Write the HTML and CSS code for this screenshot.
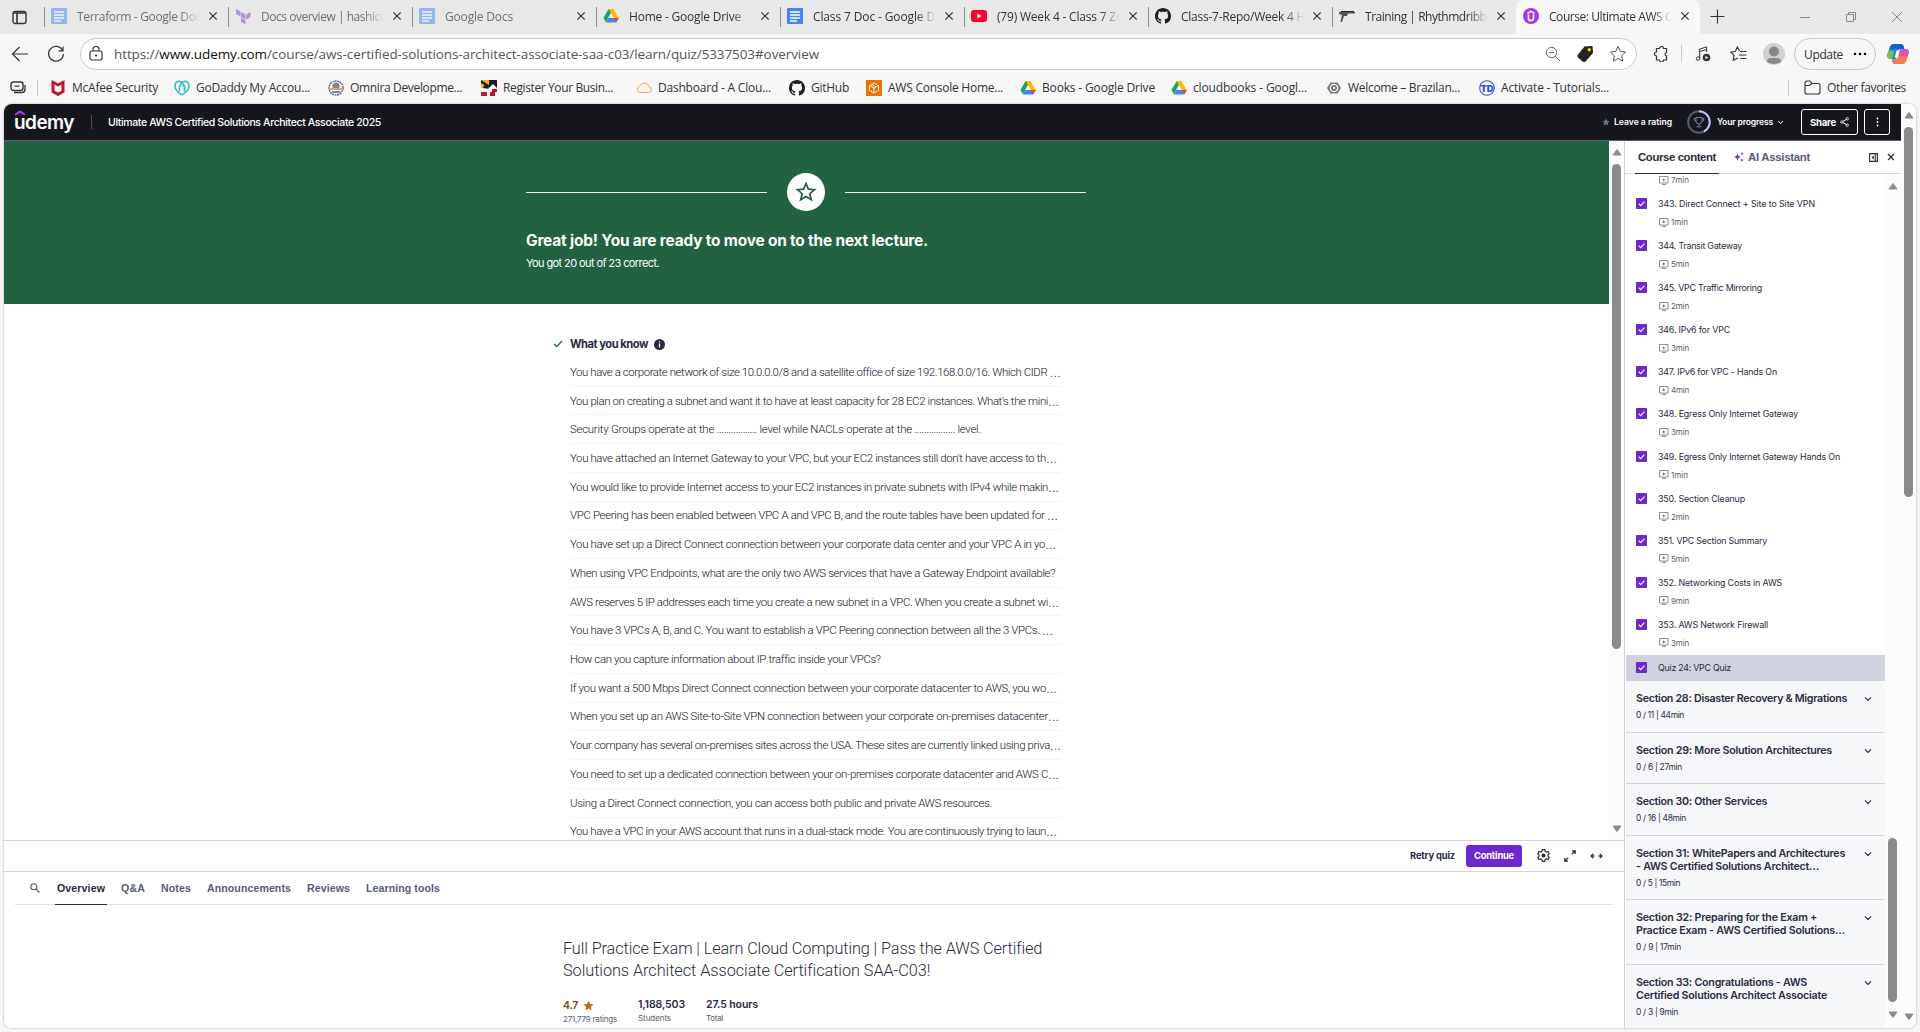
FILE: index.html
```html
<!DOCTYPE html>
<html lang="en">
<head>
<meta charset="utf-8">
<title>Course: Ultimate AWS Certified Solutions Architect Associate 2025 | Udemy</title>
<link rel="stylesheet" href="styles.css">
</head>
<body>
<svg width="0" height="0" class="defs">
  <symbol id="doc" viewBox="0 0 16 16"><rect width="16" height="16" rx="1" fill="#4285f4"/><path d="M3 4h10M3 7h10M3 10h10M3 13h7" stroke="#fff" stroke-width="1.5"/></symbol>
  <symbol id="drive" viewBox="0 0 16 16"><path d="M5.6 1h4.8L5.3 9.900 2.800 14 .4 10z" fill="#1ea362"/><path d="M5.600 1h4.800l5.300 9h-4.900z" fill="#ffba00"/><path d="M5.300 10h10.400l-2.500 4.500H2.800z" fill="#4285f4"/><path d="M10.800 10h4.900l-2.500 4.500z" fill="#ea4335"/><path d="M8 5.300l2.700 4.700H5.300z" fill="#f7f7f7"/></symbol>
  <symbol id="github" viewBox="0 0 16 16"><path fill="#1b1f23" d="M8 0C3.580 0 0 3.580 0 8c0 3.540 2.290 6.530 5.470 7.590.4.070.55-.17.55-.38 0-.19-.01-.82-.01-1.490-2.010.37-2.530-.49-2.690-.94-.09-.23-.48-.94-.82-1.130-.28-.15-.68-.52-.01-.53.63-.01 1.080.58 1.230.82.72 1.210 1.870.87 2.330.66.07-.52.28-.87.51-1.070-1.780-.2-3.640-.89-3.640-3.950 0-.87.31-1.590.82-2.150-.08-.2-.36-1.020.08-2.120 0 0 .67-.21 2.200.82.64-.18 1.320-.27 2-.27s1.360.09 2 .27c1.530-1.040 2.200-.82 2.200-.82.44 1.100.16 1.920.08 2.120.51.56.82 1.270.82 2.150 0 3.070-1.870 3.750-3.650 3.950.29.25.54.73.54 1.480 0 1.070-.01 1.930-.01 2.200 0 .21.15.46.55.38A8 8 0 0 0 16 8c0-4.420-3.580-8-8-8z"/></symbol>
  <symbol id="close" viewBox="0 0 10 10"><path d="M1.300 1.300l7.400 7.400M8.700 1.300L1.300 8.700" stroke="#333" stroke-width="1.200"/></symbol>
  <symbol id="check" viewBox="0 0 11 11"><rect width="11" height="11" rx=".8" fill="#6d28d2"/><path d="M2.700 5.700l2 2 3.700-4" stroke="#fff" stroke-width="1.100" fill="none"/></symbol>
  <symbol id="video" viewBox="0 0 10 9"><path d="M.5.500h8.500v6.500H.5zM3 8.500h4" stroke="#8a8aa0" fill="none"/><path d="M3.800 2.200v3.300l2.700-1.600z" fill="#6a6a85"/></symbol>
  <symbol id="chev" viewBox="0 0 8 6"><path d="M1 1.300l3 3 3-3" fill="none" stroke="currentColor" stroke-width="1.200"/></symbol>
  <symbol id="up" viewBox="0 0 10 7"><path d="M5 .5L9 6H1z" fill="#8b8b8b" stroke="#8b8b8b" stroke-linejoin="round"/></symbol>
  <symbol id="down" viewBox="0 0 10 7"><path d="M5 6.500L1 1h8z" fill="#8b8b8b" stroke="#8b8b8b" stroke-linejoin="round"/></symbol>
</svg>

<div class="tabstrip">
  <svg class="workspaces" width="15" height="15" viewBox="0 0 15 15"><rect x="1" y="1.500" width="13" height="12" rx="2.200" fill="none" stroke="#333" stroke-width="1.400"/><path d="M1.500 3h12M5 3v10" stroke="#333" stroke-width="1.600"/></svg>
  <div class="tab asleep"><svg class="fav"><use href="#doc"/></svg><div class="label"><span data-w="124">Terraform - Google Doc</span></div><svg class="x"><use href="#close"/></svg></div>
  <div class="tab asleep"><svg class="fav" viewBox="0 0 16 16"><path d="M1 1l4.500 2.500v5L1 6zM6 4l4.500 2.500v5L6 9zM6 9.800l4.500 2.500V16L6 14zM11.200 6.500L15.500 4v5l-4.300 2.500z" fill="#7b42bc"/></svg><div class="label"><span data-w="124">Docs overview | hashicc</span></div><svg class="x"><use href="#close"/></svg></div>
  <div class="tab asleep"><svg class="fav"><use href="#doc"/></svg><div class="label"><span data-w="68">Google Docs</span></div><svg class="x"><use href="#close"/></svg></div>
  <div class="tab"><svg class="fav"><use href="#drive"/></svg><div class="label"><span data-w="112">Home - Google Drive</span></div><svg class="x"><use href="#close"/></svg></div>
  <div class="tab"><svg class="fav"><use href="#doc"/></svg><div class="label"><span data-w="122">Class 7 Doc - Google D</span></div><svg class="x"><use href="#close"/></svg></div>
  <div class="tab"><svg class="fav" viewBox="0 0 16 16"><rect y="2" width="16" height="12" rx="3" fill="#ff0033"/><path d="M6.300 5.500v5L10.700 8z" fill="#fff"/></svg><div class="label"><span data-w="126">(79) Week 4 - Class 7 Zo</span></div><svg class="x"><use href="#close"/></svg></div>
  <div class="tab"><svg class="fav"><use href="#github"/></svg><div class="label"><span data-w="124">Class-7-Repo/Week 4 H</span></div><svg class="x"><use href="#close"/></svg></div>
  <div class="tab"><svg class="fav" viewBox="0 0 16 16"><path d="M0 4h16v1.500H9l-1 2.500H5L3 14H1.500L3 7 0 6z" fill="#55524a"/><path d="M2 3h13v1H2z" fill="#222"/></svg><div class="label"><span data-w="124">Training | Rhythmdribbl</span></div><svg class="x"><use href="#close"/></svg></div>
  <div class="tab active"><svg class="fav" viewBox="0 0 16 16"><circle cx="8" cy="8" r="8" fill="#a435f0"/><path d="M4.500 5.500L8 3.200l3.500 2.300" fill="none" stroke="#fff" stroke-width="1.500"/><path d="M5.500 6.500v3.700a2.500 2.500 0 0 0 5 0V6.500" fill="none" stroke="#fff" stroke-width="1.700"/></svg><div class="label"><span data-w="123">Course: Ultimate AWS C</span></div><svg class="x"><use href="#close"/></svg></div>
  <svg class="newtab" width="15" height="15" viewBox="0 0 15 15"><path d="M7.500.5v14M.5 7.500h14" stroke="#333" stroke-width="1.100"/></svg>
  <div class="winctl">
    <svg width="12" height="12" viewBox="0 0 12 12"><path d="M1 6.500h10" stroke="#888"/></svg>
    <svg width="12" height="12" viewBox="0 0 12 12"><path d="M1.500 3.500h7v7h-7zM3.500 3V1.500h7v7H9" fill="none" stroke="#888"/></svg>
    <svg width="12" height="12" viewBox="0 0 12 12"><path d="M1 1l10 10M11 1L1 11" stroke="#888"/></svg>
  </div>
</div>

<div class="toolbar">
  <svg class="back" width="18" height="16" viewBox="0 0 18 16"><path d="M17 8H1.500M8.500 1L1.500 8l7 7" fill="none" stroke="#333" stroke-width="1.200"/></svg>
  <svg class="reload" width="18" height="18" viewBox="0 0 18 18"><path d="M15.500 5.200A7.400 7.400 0 1 0 16.400 9M16 1.500v4.300h-4.300" fill="none" stroke="#333" stroke-width="1.200"/></svg>
  <div class="address">
    <svg width="14" height="16" viewBox="0 0 14 16"><rect x="1" y="5" width="12" height="9" rx="2" fill="none" stroke="#333" stroke-width="1.200"/><path d="M4 5V3.500a3 3 0 0 1 6 0V5" fill="none" stroke="#333" stroke-width="1.200"/><circle cx="7" cy="9.500" r="1.100" fill="#333"/></svg>
    <span class="url" data-w="705">https://<b>www.udemy.com</b>/course/aws-certified-solutions-architect-associate-saa-c03/learn/quiz/5337503#overview</span>
    <div class="address-actions">
      <svg width="16" height="16" viewBox="0 0 16 16"><circle cx="6.500" cy="6.500" r="5.200" fill="none" stroke="#666"/><path d="M4 6.500h5M10.300 10.300L15 15" stroke="#666"/></svg>
      <svg width="18" height="18" viewBox="0 0 18 18"><path d="M8.500 1.500L16.500 1l.5 7-7.500 8.500q-1.500 1.200-3 0L2 12.500q-1.200-1.500 0-3z" fill="#222"/><circle cx="13.300" cy="4.800" r="1.800" fill="#ffc400"/></svg>
      <svg width="18" height="18" viewBox="0 0 18 18"><path d="M9 1.500l2.300 4.900 5.200.7-3.800 3.700.9 5.300L9 13.500l-4.600 2.600.9-5.300L1.500 7.100l5.200-.7z" fill="none" stroke="#555"/></svg>
    </div>
  </div>
  <div class="tools">
    <svg width="16" height="16" viewBox="0 0 16 16"><path d="M3.500 2.500h3a2 2 0 0 1 4 0h3v4a1.800 1.800 0 0 0 0 3.500v4h-3a2 2 0 0 1-4 0h-3v-4a2 2 0 1 1 0-4z" fill="none" stroke="#333" stroke-width="1.200"/></svg>
    <i class="vr"></i>
    <svg width="16" height="16" viewBox="0 0 16 16"><circle cx="3" cy="12.500" r="1.700" fill="none" stroke="#333"/><path d="M4.700 12.500V3l7-2v5M4.700 5.500l7-2" fill="none" stroke="#333"/><circle cx="11.500" cy="11.500" r="3.800" fill="#333"/><path d="M10.500 9.700v3.600l2.700-1.800z" fill="#fff"/></svg>
    <svg width="17" height="16" viewBox="0 0 17 16"><path d="M9.500 5L7.400 1 5.200 5.500l-4.400.7 3.300 3.200-.8 4.800L8 12M10 5.500h6.500M9 9h7.500M10.500 12.500h6" fill="none" stroke="#333" stroke-width="1.200"/></svg>
    <svg width="22" height="22" viewBox="0 0 22 22"><circle cx="11" cy="11" r="11" fill="#d2d0ce"/><circle cx="11" cy="8.500" r="5" fill="#8a8886"/><path d="M4 19q0-4 4-4h6q4 0 4 4-7 4-14 0z" fill="#8a8886"/></svg>
    <div class="update"><span data-w="39">Update</span><svg width="14" height="4" viewBox="0 0 14 4"><circle cx="2" cy="2" r="1.300"/><circle cx="7" cy="2" r="1.300"/><circle cx="12" cy="2" r="1.300"/></svg></div>
    <svg width="22" height="20" viewBox="0 0 22 20"><path d="M7 0h7q2 0 2.500 2l.8 3H12L9 15H4q-5 0-3.500-5L3 3Q4 0 7 0z" fill="#168bdc"/><path d="M3 3q1-3 4-3h7q2 0 2.500 2l.8 3H2.300z" fill="#1266c9"/><path d="M.5 10L1.500 7H7l-2 8H4q-4 0-3.500-5z" fill="#7cc243"/><path d="M15 20H8q-2 0-2.500-2L4.700 15H10l3-10h5q5 0 3.500 5L19 17q-1 3-4 3z" fill="#e8539b"/><path d="M4.700 15H10l1-3h9.800L19 17q-1 3-4 3H8q-2 0-2.500-2z" fill="#fa7a50"/><path d="M13 5h5q4.500 0 3.800 4H12z" fill="#b65bdc"/><path d="M9.500 6.500h3.300l-2 7H7.600z" fill="#f7f7f7"/></svg>
  </div>
</div>

<div class="bookmarks">
  <svg class="groups" width="16" height="13" viewBox="0 0 16 13"><rect x="1" y="1" width="12" height="8.500" rx="2.500" fill="none" stroke="#333" stroke-width="1.400"/><path d="M4.500 5.200h5M15 4v4.500q0 3-3 3H4" fill="none" stroke="#333" stroke-width="1.300"/></svg>
  <i class="vr"></i>
  <div class="marks">
    <div class="mark"><svg class="fav" viewBox="0 0 16 16"><path d="M1.500 0L8 3.500 14.500 0v12.500L8 16l-6.500-3.500z" fill="#c8102e"/><path d="M4.500 4.500v6.200L8 12.500l3.500-1.800V4.500L8 6.500z" fill="#f7f7f7"/></svg><span data-w="86">McAfee Security</span></div>
    <div class="mark"><svg class="fav" viewBox="0 0 16 16"><path d="M8 14.800C2 12 0 7 1.500 3.500 3 .3 7 .8 9.500 4.500c1.500 2.300 1.700 4.500.8 7M8 14.800c6-2.800 8-7.800 6.500-11.300C13 .3 9 .8 6.500 4.500 5 6.800 4.800 9 5.700 11.500" fill="none" stroke="#35bfc4" stroke-width="1.600"/><path d="M8 6h3v3H9" fill="none" stroke="#35bfc4"/></svg><span data-w="114">GoDaddy My Accou...</span></div>
    <div class="mark"><svg class="fav" viewBox="0 0 16 16"><circle cx="8" cy="8" r="7" fill="#fff" stroke="#566083" stroke-width="1.400" stroke-dasharray="2 .6"/><circle cx="8" cy="6" r="3.600" fill="#7d83a5"/><path d="M1 9h14" stroke="#dca958" stroke-width="2"/><path d="M4 12h8" stroke="#566083" stroke-width="1.500"/></svg><span data-w="112">Omnira Developme...</span></div>
    <div class="mark"><svg class="fav" viewBox="0 0 16 16"><rect width="16" height="16" fill="#fff"/><path d="M0 0h8v8H0z" fill="#fdb913"/><path d="M0 0l8 5v3L0 3zM8 0h8v8l-4-4-4 4zM2 8l2-4 4 5z" fill="#1a1a1a"/><path d="M0 12h6v4H0zM9 12h5v4H9zM11 9h5v3h-5z" fill="#c8102e"/></svg><span data-w="110">Register Your Busin...</span></div>
    <div class="mark"><svg class="fav" viewBox="0 0 16 16"><path d="M4 12.500h8.500a3 3 0 0 0 .6-5.900 5 5 0 0 0-9.500-.3 3.200 3.200 0 0 0 .4 6.200z" fill="#fff4ea" stroke="#f5a15c"/></svg><span data-w="113">Dashboard - A Clou...</span></div>
    <div class="mark"><svg class="fav"><use href="#github"/></svg><span data-w="38">GitHub</span></div>
    <div class="mark"><svg class="fav" viewBox="0 0 16 16"><rect width="16" height="16" fill="#ed7100"/><path d="M8 3l4.500 2.500v5L8 13l-4.500-2.500v-5zM3.500 5.500L8 8l4.500-2.500M8 8v5M5.500 4.300L10 7" fill="none" stroke="#fff" stroke-width=".9"/></svg><span data-w="115">AWS Console Home...</span></div>
    <div class="mark"><svg class="fav"><use href="#drive"/></svg><span data-w="113">Books - Google Drive</span></div>
    <div class="mark"><svg class="fav"><use href="#drive"/></svg><span data-w="114">cloudbooks - Googl...</span></div>
    <div class="mark"><svg class="fav" viewBox="0 0 16 16"><path d="M4.500 2.500h7L15 8l-3.500 5.500h-7L1 8z" fill="#757575"/><circle cx="8" cy="8" r="3.700" fill="none" stroke="#fff" stroke-width="1.300"/><circle cx="8" cy="8" r="1.200" fill="#fff"/></svg><span data-w="112">Welcome – Brazilan...</span></div>
    <div class="mark"><svg class="fav" viewBox="0 0 16 16"><circle cx="8" cy="8" r="7.300" fill="#fff" stroke="#2b50f0" stroke-width="1.100"/><text x="8" y="11.500" text-anchor="middle" font-family="Inter, sans-serif" font-size="9.500" font-weight="900" fill="#2b50f0" textLength="13">TD</text></svg><span data-w="108">Activate - Tutorials...</span></div>
  </div>
  <div class="other"><i class="vr"></i><svg width="17" height="15" viewBox="0 0 17 15"><path d="M1 3.500Q1 1 3 1h3l2 2.500h6q2 0 2 2V12q0 2-2 2H3q-2 0-2-2zM1 5.500h4.500L8 3.500" fill="none" stroke="#333" stroke-width="1.100"/></svg><span data-w="79">Other favorites</span></div>
</div>

<div class="page">
  <div class="app">
    <header class="header">
      <div class="logo"><svg width="10" height="6" viewBox="0 0 10 6"><path d="M0 3.500L5 .3l5 3.200v2.300L5 3 0 5.800z" fill="#a435f0"/></svg><span data-w="60">udemy</span></div>
      <i class="vr"></i>
      <span class="course" data-w="273">Ultimate AWS Certified Solutions Architect Associate 2025</span>
      <div class="header-right">
        <svg width="8" height="8" viewBox="0 0 18 18"><path d="M9 1l2.500 5.400 5.700.7-4.200 4 1 5.900L9 14l-5 3 1-5.900-4.200-4 5.700-.7z" fill="#6c6f8c"/></svg>
        <span class="rate" data-w="58">Leave a rating</span>
        <svg class="ring" width="24" height="24" viewBox="0 0 24 24"><circle cx="12" cy="12" r="10.800" fill="none" stroke="#595c73" stroke-width="2"/><path d="M12 1.200a10.800 10.800 0 0 1 5 20.300" fill="none" stroke="#c0c4fc" stroke-width="2"/><path d="M9 7.500h6v4q-.5 2.500-3 2.500t-3-2.500zM9 8.500H7q0 3 2.200 3M15 8.500h2q0 3-2.200 3M12 14v2.500M9.500 16.800h5" fill="none" stroke="#7a7d97"/></svg>
        <span class="prog" data-w="56">Your progress</span>
        <svg class="pchev" width="7" height="5"><use href="#chev"/></svg>
        <div class="btn share"><span data-w="26">Share</span><svg width="9" height="10" viewBox="0 0 9 10"><path d="M7 2L2 5l5 3" fill="none" stroke="#fff"/><g fill="#16171d" stroke="#fff" stroke-width=".8"><circle cx="7.200" cy="1.800" r="1.200"/><circle cx="1.800" cy="5" r="1.200"/><circle cx="7.200" cy="8.200" r="1.200"/></g></svg></div>
        <div class="btn more"><svg width="3" height="10" viewBox="0 0 3 10" fill="#fff"><circle cx="1.500" cy="1.500" r=".9"/><circle cx="1.500" cy="5" r=".9"/><circle cx="1.500" cy="8.500" r=".9"/></svg></div>
      </div>
    </header>

    <div class="columns">
      <main class="main">
        <div class="quiz">
          <div class="quiz-body">
            <section class="result">
              <div class="divider"><i></i><span class="medal"><svg width="22" height="22" viewBox="0 0 22 22"><path d="M11 2.500l2.400 5.700 6.100.5-4.700 4 1.500 6L11 15.500l-5.300 3.200 1.500-6-4.700-4 6.100-.5z" fill="none" stroke="#206241" stroke-width="1.700"/></svg></span><i></i></div>
              <h1><span data-w="402">Great job! You are ready to move on to the next lecture.</span></h1>
              <p><span data-w="133">You got 20 out of 23 correct.</span></p>
            </section>
            <section class="know">
              <h2><svg class="tick" width="10" height="8" viewBox="0 0 10 8"><path d="M1 4l2.700 2.700L9 1" fill="none" stroke="#206241" stroke-width="1.200"/></svg><span data-w="78">What you know</span><svg class="info" width="11" height="11" viewBox="0 0 11 11"><circle cx="5.500" cy="5.500" r="5.500" fill="#2a2b3f"/><path d="M5.500 2.300v1.300M5.500 4.600v4" stroke="#fff" stroke-width="1.200"/></svg></h2>
              <ul>
                <li><span data-w="479">You have a corporate network of size 10.0.0.0/8 and a satellite office of size 192.168.0.0/16. Which CIDR </span><b>…</b></li>
                <li><span data-w="478">You plan on creating a subnet and want it to have at least capacity for 28 EC2 instances. What's the mini</span><b>…</b></li>
                <li><span data-w="403">Security Groups operate at the <em>.................</em> level while NACLs operate at the <em>.................</em> level.</span></li>
                <li><span data-w="476">You have attached an Internet Gateway to your VPC, but your EC2 instances still don't have access to th</span><b>…</b></li>
                <li><span data-w="478">You would like to provide Internet access to your EC2 instances in private subnets with IPv4 while makin</span><b>…</b></li>
                <li><span data-w="477">VPC Peering has been enabled between VPC A and VPC B, and the route tables have been updated for </span><b>…</b></li>
                <li><span data-w="475">You have set up a Direct Connect connection between your corporate data center and your VPC A in yo</span><b>…</b></li>
                <li><span data-w="485">When using VPC Endpoints, what are the only two AWS services that have a Gateway Endpoint available?</span></li>
                <li><span data-w="478">AWS reserves 5 IP addresses each time you create a new subnet in a VPC. When you create a subnet wi</span><b>…</b></li>
                <li><span data-w="472">You have 3 VPCs A, B, and C. You want to establish a VPC Peering connection between all the 3 VPCs. </span><b>…</b></li>
                <li><span data-w="310">How can you capture information about IP traffic inside your VPCs?</span></li>
                <li><span data-w="476">If you want a 500 Mbps Direct Connect connection between your corporate datacenter to AWS, you wo</span><b>…</b></li>
                <li><span data-w="478">When you set up an AWS Site-to-Site VPN connection between your corporate on-premises datacenter</span><b>…</b></li>
                <li><span data-w="480">Your company has several on-premises sites across the USA. These sites are currently linked using priva</span><b>…</b></li>
                <li><span data-w="478">You need to set up a dedicated connection between your on-premises corporate datacenter and AWS C</span><b>…</b></li>
                <li><span data-w="422">Using a Direct Connect connection, you can access both public and private AWS resources.</span></li>
                <li><span data-w="476">You have a VPC in your AWS account that runs in a dual-stack mode. You are continuously trying to laun</span><b>…</b></li>
              </ul>
            </section>
          </div>
          <div class="scroll scroll-quiz"><svg><use href="#up"/></svg><i></i><svg><use href="#down"/></svg></div>
        </div>

        <div class="controls">
          <span class="retry" data-w="45">Retry quiz</span>
          <div class="continue"><span data-w="40">Continue</span></div>
          <svg class="gear" width="13" height="13" viewBox="0 0 13 13"><path d="M5.300.7h2.400l.4 1.600 1.300.7 1.600-.5 1.200 2.100-1.200 1.100v1.600l1.200 1.100-1.200 2.100-1.600-.5-1.300.7-.4 1.600H5.300l-.4-1.600-1.300-.7-1.600.5L.8 8.400 2 7.300V5.700L.8 4.600 2 2.500l1.600.5 1.300-.7z" fill="none" stroke="#2a2b3f" stroke-width="1.200"/><circle cx="6.500" cy="6.500" r="2" fill="#2a2b3f"/></svg>
          <svg class="expand" width="12" height="12" viewBox="0 0 12 12"><path d="M8 .8h3.200V4M11 1L7.700 4.300M4 11.200H.8V8M1 11l3.300-3.300" fill="none" stroke="#2a2b3f" stroke-width="1.200"/></svg>
          <svg class="wide" width="13" height="6" viewBox="0 0 13 6"><path d="M5 3H1M3.300.8L1 3l2.300 2.200M8 3H12M9.700.8L12 3 9.700 5.200" fill="none" stroke="#2a2b3f" stroke-width="1.200"/></svg>
        </div>

        <div class="dashboard">
          <nav class="subnav">
            <svg width="10" height="10" viewBox="0 0 10 10"><circle cx="3.800" cy="3.800" r="3" fill="none" stroke="#595c73" stroke-width="1.100"/><path d="M6 6l3.500 3.500" stroke="#595c73" stroke-width="1.300"/></svg>
            <div class="on"><span data-w="48">Overview</span></div>
            <div><span data-w="24">Q&amp;A</span></div>
            <div><span data-w="30">Notes</span></div>
            <div><span data-w="84">Announcements</span></div>
            <div><span data-w="43">Reviews</span></div>
            <div><span data-w="74">Learning tools</span></div>
          </nav>
          <div class="about">
            <p><span data-w="479">Full Practice Exam | Learn Cloud Computing | Pass the AWS Certified</span></p>
            <p><span data-w="367">Solutions Architect Associate Certification SAA-C03!</span></p>
            <div class="stats">
              <div class="stat rating"><strong><span data-w="15">4.7</span><svg width="11" height="11" viewBox="0 0 18 18"><path d="M9 1l2.500 5.400 5.700.7-4.200 4 1 5.900L9 14l-5 3 1-5.900-4.200-4 5.700-.7z" fill="#c4710d"/></svg></strong><small><span data-w="54">271,779 ratings</span></small></div>
              <div class="stat"><strong><span data-w="47">1,188,503</span></strong><small><span data-w="33">Students</span></small></div>
              <div class="stat"><strong><span data-w="52">27.5 hours</span></strong><small><span data-w="17">Total</span></small></div>
            </div>
          </div>
        </div>
      </main>

      <aside class="side">
        <div class="side-head">
          <div class="side-tab on"><span data-w="78">Course content</span></div>
          <div class="side-tab ai"><svg width="10" height="10" viewBox="0 0 10 10"><path d="M3.500 1.500l1 2.500 2.500 1-2.500 1-1 2.500-1-2.500L0 5l2.500-1zM8 0l.5 1.300L9.800 1.800l-1.300.5L8 3.600l-.5-1.300-1.300-.5 1.300-.5zM8 6.300l.5 1.300 1.300.5-1.300.5L8 9.900l-.5-1.300-1.300-.5 1.300-.5z" fill="#6d28d2"/></svg><span data-w="62">AI Assistant</span></div>
          <div class="side-actions"><svg width="9" height="9" viewBox="0 0 9 9"><path d="M.6.600h7.800v7.800H.6zM6.300.500v8" fill="none" stroke="#2a2b3f" stroke-width="1.100"/><path d="M4.800 2.500v4L2.500 4.500z" fill="#2a2b3f"/></svg><svg width="8" height="8" viewBox="0 0 10 10"><path d="M1.300 1.300l7.400 7.400M8.700 1.300L1.300 8.700" stroke="#2a2b3f" stroke-width="1.600"/></svg></div>
        </div>
        <div class="side-body">
          <div class="lectures">
            <div class="time first"><svg><use href="#video"/></svg><span data-w="18">7min</span></div>
            <div class="lec"><div class="name"><svg><use href="#check"/></svg><span data-w="157">343. Direct Connect + Site to Site VPN</span></div><div class="time"><svg><use href="#video"/></svg><span data-w="17">1min</span></div></div>
            <div class="lec"><div class="name"><svg><use href="#check"/></svg><span data-w="84">344. Transit Gateway</span></div><div class="time"><svg><use href="#video"/></svg><span data-w="18">5min</span></div></div>
            <div class="lec"><div class="name"><svg><use href="#check"/></svg><span data-w="104">345. VPC Traffic Mirroring</span></div><div class="time"><svg><use href="#video"/></svg><span data-w="18">2min</span></div></div>
            <div class="lec"><div class="name"><svg><use href="#check"/></svg><span data-w="72">346. IPv6 for VPC</span></div><div class="time"><svg><use href="#video"/></svg><span data-w="18">3min</span></div></div>
            <div class="lec"><div class="name"><svg><use href="#check"/></svg><span data-w="119">347. IPv6 for VPC - Hands On</span></div><div class="time"><svg><use href="#video"/></svg><span data-w="18">4min</span></div></div>
            <div class="lec"><div class="name"><svg><use href="#check"/></svg><span data-w="140">348. Egress Only Internet Gateway</span></div><div class="time"><svg><use href="#video"/></svg><span data-w="18">3min</span></div></div>
            <div class="lec"><div class="name"><svg><use href="#check"/></svg><span data-w="182">349. Egress Only Internet Gateway Hands On</span></div><div class="time"><svg><use href="#video"/></svg><span data-w="17">1min</span></div></div>
            <div class="lec"><div class="name"><svg><use href="#check"/></svg><span data-w="87">350. Section Cleanup</span></div><div class="time"><svg><use href="#video"/></svg><span data-w="18">2min</span></div></div>
            <div class="lec"><div class="name"><svg><use href="#check"/></svg><span data-w="109">351. VPC Section Summary</span></div><div class="time"><svg><use href="#video"/></svg><span data-w="18">5min</span></div></div>
            <div class="lec"><div class="name"><svg><use href="#check"/></svg><span data-w="124">352. Networking Costs in AWS</span></div><div class="time"><svg><use href="#video"/></svg><span data-w="18">9min</span></div></div>
            <div class="lec"><div class="name"><svg><use href="#check"/></svg><span data-w="110">353. AWS Network Firewall</span></div><div class="time"><svg><use href="#video"/></svg><span data-w="18">3min</span></div></div>
            <div class="name current"><svg><use href="#check"/></svg><span data-w="73">Quiz 24: VPC Quiz</span></div>
            <div class="sec"><div><h3><span data-w="211">Section 28: Disaster Recovery &amp; Migrations</span></h3><p><span data-w="48">0 / 11 | 44min</span></p></div><svg><use href="#chev"/></svg></div>
            <div class="sec"><div><h3><span data-w="196">Section 29: More Solution Architectures</span></h3><p><span data-w="46">0 / 6 | 27min</span></p></div><svg><use href="#chev"/></svg></div>
            <div class="sec"><div><h3><span data-w="131">Section 30: Other Services</span></h3><p><span data-w="50">0 / 16 | 48min</span></p></div><svg><use href="#chev"/></svg></div>
            <div class="sec tall"><div><h3><span data-w="209">Section 31: WhitePapers and Architectures</span><span data-w="183">- AWS Certified Solutions Architect…</span></h3><p><span data-w="44">0 / 5 | 15min</span></p></div><svg><use href="#chev"/></svg></div>
            <div class="sec tall"><div><h3><span data-w="181">Section 32: Preparing for the Exam +</span><span data-w="209">Practice Exam - AWS Certified Solutions…</span></h3><p><span data-w="45">0 / 9 | 17min</span></p></div><svg><use href="#chev"/></svg></div>
            <div class="sec tall"><div><h3><span data-w="171">Section 33: Congratulations - AWS</span><span data-w="191">Certified Solutions Architect Associate</span></h3><p><span data-w="42">0 / 3 | 9min</span></p></div><svg><use href="#chev"/></svg></div>
          </div>
          <div class="scroll scroll-side"><svg><use href="#up"/></svg><i></i><svg><use href="#down"/></svg></div>
        </div>
      </aside>
    </div>
  </div>
  <div class="scroll scroll-page"><svg><use href="#up"/></svg><i></i><svg><use href="#down"/></svg></div>
</div>
<script src="fit.js"></script>
</body>
</html>
```
FILE: fit.js
```js
// Tracks each label so that it fills its measured width.
document.querySelectorAll('[data-w]').forEach(function (el) {
  var target = parseFloat(el.dataset.w);
  var natural = el.getBoundingClientRect().width;
  el.style.letterSpacing = (target - natural) / el.textContent.length + 'px';
});
```
FILE: styles.css
```css
* { box-sizing: border-box; margin: 0; padding: 0; }
body { width: 1920px; height: 1032px; overflow: hidden; display: flex; flex-direction: column; background: #f7f7f7; color: #2a2b3f; font-family: Inter, "Liberation Sans", sans-serif; }
svg { display: block; flex: none; }
.defs { position: absolute; }
[data-w] { display: inline-block; white-space: pre; flex: none; }
ul { list-style: none; }
.fav { width: 16px; height: 16px; }
.vr { flex: none; width: 1px; height: 16px; background: #c9c9c9; }

.tabstrip, .toolbar, .bookmarks { display: flex; align-items: center; flex: none; font-family: "Open Sans", "Noto Sans", sans-serif; font-size: 12px; color: #333; }
.tabstrip { height: 34px; background: #e8e8e8; }
.workspaces { margin: 0 17px 0 12px; }
.tab { position: relative; display: flex; align-items: center; width: 184px; height: 34px; padding: 0 10px 2px 7px; }
.tab::before { content: ""; position: absolute; left: 0; top: 7px; width: 1px; height: 20px; background: #8c8c8c; }
.tab .label { width: 123px; margin: 0 8px 0 10px; overflow: hidden; -webkit-mask-image: linear-gradient(90deg, #000 84%, transparent); mask-image: linear-gradient(90deg, #000 84%, transparent); }
.tab .x { width: 10px; height: 10px; }
.asleep .fav { opacity: .5; }
.asleep .label { color: #707070; }
.active { background: #f7f7f7; border-radius: 8px 8px 0 0; }
.active::before { display: none; }
.newtab { margin: 0 0 2px 10px; }
.winctl { display: flex; gap: 34px; margin-left: auto; margin-right: 17px; }

.toolbar { height: 40px; }
.back { margin-left: 11px; }
.reload { margin-left: 18px; }
.address { display: flex; align-items: center; width: 1557px; height: 32px; margin-left: 15px; padding: 0 9px 0 10px; border: 1px solid #cacaca; border-radius: 16px; background: #fff; }
.address > svg { margin-right: 11px; margin-left: -2px; }
.url { font-size: 13.5px; color: #555; }
.url b { font-weight: 400; color: #111; }
.address-actions { display: flex; gap: 15px; align-items: center; margin-left: auto; }
.tools { display: flex; align-items: center; }
.tools > :nth-child(1) { margin-left: 16px; }
.tools > :nth-child(2) { margin-left: 12px; height: 18px; }
.tools > :nth-child(3) { margin-left: 13px; }
.tools > :nth-child(4) { margin-left: 19px; }
.tools > :nth-child(5) { margin-left: 16px; }
.tools > :nth-child(6) { margin-left: 9px; }
.tools > :nth-child(7) { margin-left: 11px; }
.update { display: flex; align-items: center; gap: 10px; width: 82px; height: 32px; padding-left: 9px; border: 1px solid #cacaca; border-radius: 16px; }

.bookmarks { height: 30px; padding-bottom: 3px; }
.groups { margin: 0 11px 0 10px; }
.marks { display: grid; grid-template-columns: 124px 154px 153px 155px 153px 77px 154px 151px 155px 153px 131px; margin-left: 12px; }
.mark { display: flex; align-items: center; gap: 6px; }
.other { display: flex; align-items: center; margin-left: auto; margin-right: 14px; }
.other svg { margin: 0 6px 0 15px; }

.page { display: flex; flex: none; width: 1912px; height: 924px; margin-left: 4px; overflow: hidden; background: #fff; border-radius: 8px; box-shadow: 0 0 2px 1px #d5d5d5; }
.app { display: flex; flex-direction: column; width: 1897px; }
.header { display: flex; align-items: center; flex: none; height: 37px; background: #16171d; border-bottom: 1px solid #595c73; color: #fff; font-weight: 600; }
.logo { position: relative; width: 61px; margin-left: 10px; padding-top: 1px; font-size: 19px; line-height: 24px; font-weight: 600; }
.logo svg { position: absolute; left: 1px; top: 0; }
.header .vr { margin: 0 16px 0 16px; height: 14px; background: #4b4d63; }
.course { font-size: 10.5px; font-weight: 500; }
.header-right { display: flex; align-items: center; margin-left: auto; margin-right: 11px; font-size: 8.6px; }
.rate { margin-left: 4px; }
.ring { margin-left: 15px; }
.prog { margin-left: 6px; }
.pchev { margin-left: 4px; }
.btn { display: flex; align-items: center; justify-content: center; height: 26px; border: 1px solid #fff; border-radius: 3px; }
.share { width: 57px; margin-left: 17px; gap: 4px; font-size: 9.6px; font-weight: 700; }
.more { width: 26px; margin-left: 6px; }

.columns { display: flex; height: 887px; }
.main { width: 1620px; }
.quiz { display: flex; height: 699px; }
.quiz-body { width: 1605px; overflow: hidden; }
.result { height: 163px; padding: 32px 0 0 522px; background: #206241; color: #fff; }
.divider { display: flex; align-items: center; justify-content: space-between; width: 560px; height: 38px; }
.divider i { width: 241px; height: 1px; background: #fff; }
.medal { display: flex; align-items: center; justify-content: center; width: 38px; height: 38px; border-radius: 50%; background: #fff; }
.result h1 { margin-top: 19px; font-size: 15.4px; line-height: 22px; font-weight: 700; }
.result p { margin-top: 4px; font-size: 11px; line-height: 15px; }
.know { width: 491px; margin-left: 566px; }
.know h2 { display: flex; align-items: center; height: 54px; padding-top: 26px; font-size: 11.2px; font-weight: 700; }
.tick { margin: 0 7px 0 -17px; }
.info { margin-left: 6px; }
.know li { display: flex; align-items: center; height: 28.72px; border-bottom: 1px solid #f3f3f6; font-family: Roboto, Inter, sans-serif; font-size: 11.4px; font-weight: 300; color: #101124; }
.know em { font-style: normal; letter-spacing: -.35px; }
.know b { font: 300 13px Inter, sans-serif; }

.scroll { display: flex; flex-direction: column; align-items: center; flex: none; width: 15px; background: #fcfcfc; }
.scroll svg { width: 10px; height: 7px; }
.scroll i { width: 9px; border-radius: 5px; background: #8b8b8b; }
.scroll svg:last-child { margin-top: auto; }
.scroll-quiz { padding: 8px 0; }
.scroll-quiz i { margin-top: 8px; height: 485px; }
.scroll-side { width: 16px; padding: 9px 1px 10px 0; }
.scroll-side i { margin-top: 648px; height: 164px; }
.scroll-page { padding: 8px 0; }
.scroll-page i { margin-top: 8px; height: 370px; }

.controls { display: flex; align-items: center; justify-content: flex-end; height: 32px; padding: 0 21px 1px 0; border-top: 1px solid #d1d2e0; border-bottom: 1px solid #d1d2e0; font-weight: 700; font-size: 9.4px; }
.continue { display: flex; align-items: center; justify-content: center; width: 56px; height: 22px; margin-left: 11px; border-radius: 3px; background: #6d28d2; color: #fff; }
.gear { margin-left: 15px; }
.expand { margin-left: 14px; }
.wide { margin-left: 14px; }

.subnav { display: flex; align-items: center; height: 33px; margin: 0 11px; padding-left: 15px; border-bottom: 1px solid #e0e0ea; font: 700 10.6px "Liberation Sans", sans-serif; color: #595c73; }
.subnav div { display: flex; align-items: center; height: 33px; margin-left: 16px; }
.subnav .on { margin: 0 -2px 0 15px; padding: 0 2px; color: #2a2b3f; border-bottom: 1px solid #2a2b3f; }
.about { padding: 33px 0 0 559px; }
.about > p { height: 22px; font: 300 16.3px/22px Roboto, Inter, sans-serif; color: #2a2b3f; }
.stats { display: flex; gap: 21px; margin-top: 15px; }
.stat strong { display: flex; align-items: center; gap: 5px; height: 14px; font-size: 10.6px; font-weight: 600; }
.stat small { display: block; height: 13px; margin-top: 1px; line-height: 13px; font-size: 8px; color: #595c73; }
.rating { padding-top: 1px; }
.rating strong { color: #8b4309; }

.side { width: 277px; border-left: 1px solid #d1d2e0; }
.side-head { display: flex; height: 33px; padding-left: 10px; border-bottom: 1px solid #d9dae4; font: 700 11.4px "Liberation Sans", sans-serif; }
.side-tab { display: flex; align-items: center; height: 32px; }
.side-tab.on { height: 33px; padding: 0 3px; border-bottom: 1px solid #2a2b3f; }
.ai { gap: 4px; margin-left: 15px; color: #595c73; }
.side-actions { display: flex; align-items: center; gap: 9px; margin-left: auto; margin-right: 6px; }
.side-body { display: flex; height: 854px; }
.lectures { width: 260px; padding-left: 1px; overflow: hidden; }
.time { display: flex; align-items: center; gap: 2px; height: 12px; padding-left: 33px; font-size: 8px; color: #595c73; }
.time svg { width: 10px; height: 9px; }
.first { margin-bottom: 6px; }
.lec { height: 42.1px; }
.lec .time { margin-top: 1px; }
.name { display: flex; align-items: center; gap: 11px; height: 23px; padding-left: 10px; font-size: 8.9px; }
.name svg { width: 11px; height: 11px; }
.current { height: 26px; padding-bottom: 1px; background: #d1d2e0; }
.sec { display: flex; justify-content: space-between; height: 51.5px; padding: 11px 13px 0 10px; background: #f6f7f9; border-bottom: 1px solid #d1d2e0; }
.sec.tall { height: 64.5px; }
.sec > svg { width: 8px; height: 6px; margin-top: 4px; }
.sec h3 { display: flex; flex-direction: column; align-items: flex-start; font-size: 10.7px; line-height: 13px; font-weight: 600; }
.sec p { margin-top: 4px; font-size: 8.4px; line-height: 13px; }
```
